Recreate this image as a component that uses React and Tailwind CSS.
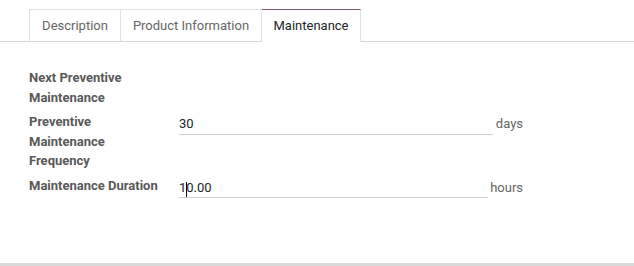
export default function App() {
  const font = { fontFamily: 'Roboto, "Noto Sans", sans-serif' };
  return (
    <div className="w-[634px] h-[266px] bg-white flex flex-col text-[13px] leading-[19.5px]" style={font}>
      <div className="flex-1">
        <div className="flex pl-[29px] pt-[9px] border-b border-[#d6d6d6]">
          <div className="w-[92px] h-[32px] flex items-center justify-center border border-b-0 border-[#dee2e6] text-[#666] -mb-px bg-white">
            Description
          </div>
          <div className="w-[141px] h-[32px] flex items-center justify-center border-t border-r border-[#dee2e6] text-[#666] -mb-px bg-white">
            Product Information
          </div>
          <div className="w-[99px] h-[33px] flex items-center justify-center border-r border-[#dee2e6] border-t border-t-[#7b5a73] text-[#212529] -mb-px bg-white">
            Maintenance
          </div>
        </div>
        <div className="pl-[29px] pt-[26px] flex flex-col gap-[5px]">
          <div className="flex">
            <div className="w-[150px] pr-4 font-bold text-[#595959]">Next Preventive Maintenance</div>
          </div>
          <div className="flex">
            <div className="w-[150px] pr-4 font-bold text-[#595959]">Preventive Maintenance Frequency</div>
            <div className="w-[344px] flex items-start mt-[2px]">
              <div className="flex-1 border-b border-[#cfcfcf] text-[#212529]">30</div>
              <div className="ml-[3px] text-[#666]">days</div>
            </div>
          </div>
          <div className="flex">
            <div className="w-[150px] pr-4 font-bold text-[#595959]">Maintenance Duration</div>
            <div className="w-[344px] flex items-start mt-[2px]">
              <div className="flex-1 border-b border-[#cfcfcf] text-[#212529]">
                1<span className="relative"><span className="absolute left-0 top-[2px] w-px h-[15px] bg-black"></span></span>0.00
              </div>
              <div className="ml-[2px] text-[#666]">hours</div>
            </div>
          </div>
        </div>
      </div>
      <div className="h-[3px] bg-[#d9d9d9]"></div>
    </div>
  );
}
